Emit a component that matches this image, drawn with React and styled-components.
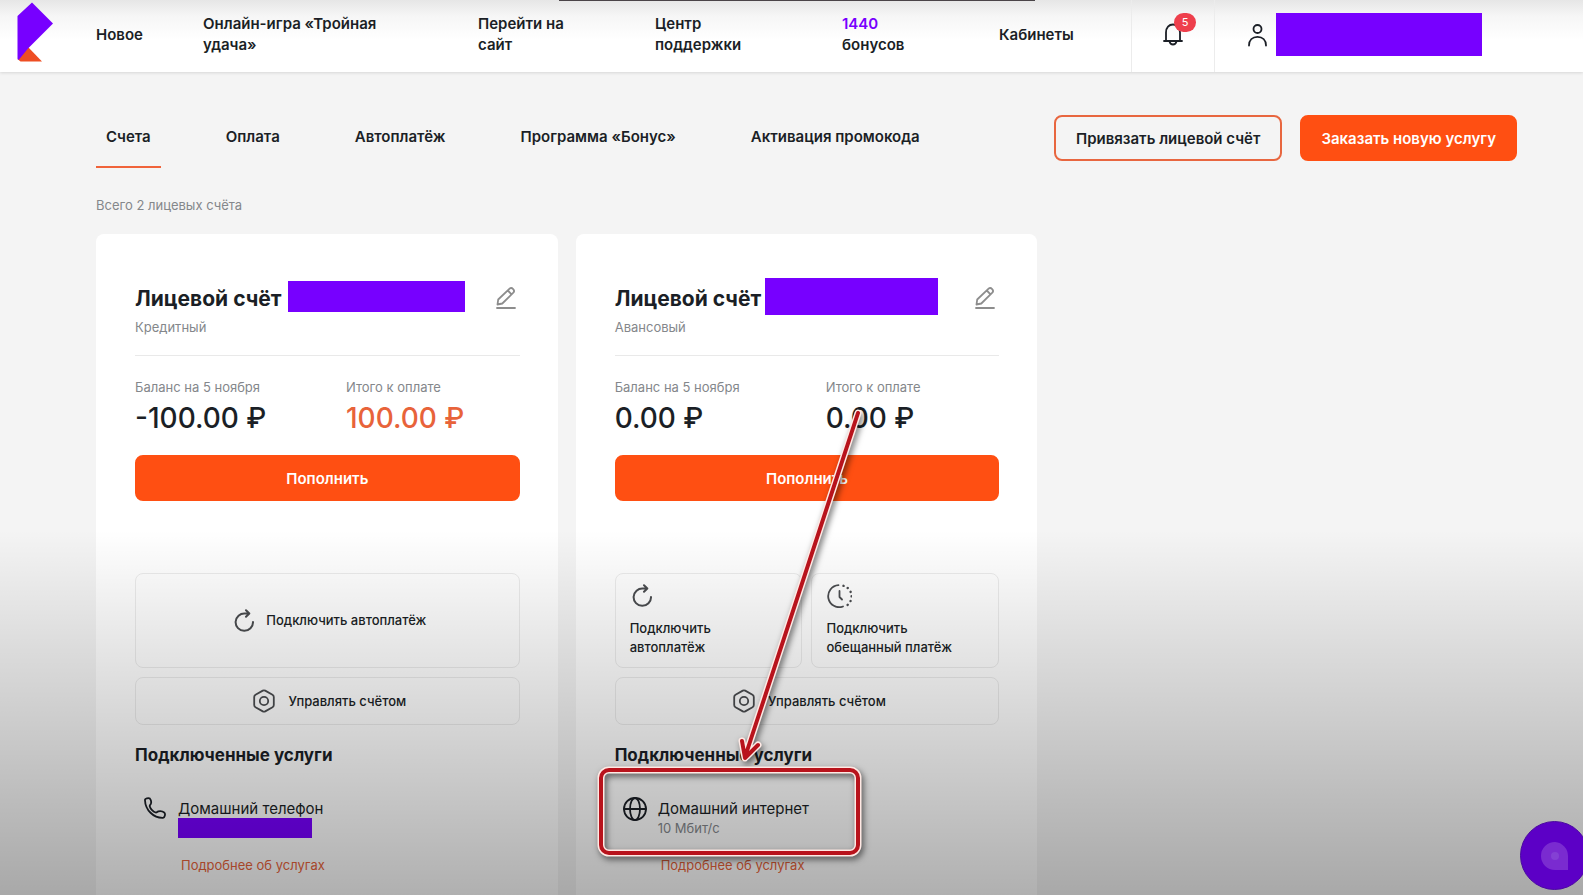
import React from "react";
import styled, { createGlobalStyle, css } from "styled-components";

const ink = "#1b1f26";
const muted = "#84878b";
const orange = "#ff4f12";
const violet = "#7700ff";

const GlobalStyle = createGlobalStyle`
  *, *::before, *::after { box-sizing: border-box; }
  body { margin: 0; background: #f4f4f4; color: ${ink}; font-family: Inter, "Liberation Sans", sans-serif; }
  h2, h3, p, dl, dd { margin: 0; }
  a { color: inherit; text-decoration: none; }
  button { font: inherit; color: inherit; cursor: pointer; }
`;

const Page = styled.div`
  position: relative;
  display: flex;
  flex-direction: column;
  min-height: 100vh;
  overflow: hidden;
`;

const Header = styled.header`
  position: relative;
  display: flex;
  align-items: stretch;
  height: 72px;
  background: linear-gradient(#e6e6e6, #f6f6f6 16px, #ffffff 40px);
  box-shadow: 0 1px 3px rgba(0, 0, 0, 0.12);
`;

const TopLine = styled.span`
  position: absolute;
  top: 0;
  left: 559px;
  width: 476px;
  height: 1px;
  background: #4a4448;
`;

const LogoLink = styled.a`
  flex: none;
  width: 96px;
  padding-left: 17px;
`;

const Nav = styled.nav`
  display: flex;
  align-items: center;
  gap: 58px;
  padding: 0 56px 4px 0;
  border-right: 1px solid #ececec;
`;

const NavLink = styled.a`
  width: ${(p) => p.$w}px;
  font-size: 15px;
  font-weight: 600;
  line-height: 21px;
`;

const Bonus = styled.span`
  display: block;
  color: ${violet};
`;

const Bell = styled.button`
  position: relative;
  flex: none;
  width: 83px;
  padding: 0;
  border: 0;
  border-right: 1px solid #ececec;
  background: none;
`;

const Badge = styled.span`
  position: absolute;
  top: 13px;
  left: 42px;
  width: 22px;
  height: 19px;
  border-radius: 10px;
  background: #ee3f4c;
  color: #fff;
  font-size: 11px;
  line-height: 19px;
  text-align: center;
`;

const Profile = styled.div`
  display: flex;
  align-items: center;
  gap: 8px;
  padding: 0 0 3px 32px;
`;

const Redaction = styled.span`
  flex: none;
  display: block;
  width: ${(p) => p.$w}px;
  height: ${(p) => p.$h}px;
  background: ${violet};
`;

const Main = styled.main`
  flex: 1;
  display: flex;
  flex-direction: column;
  padding: 43px 66px 0 96px;
`;

const Toolbar = styled.div`
  display: flex;
  align-items: flex-start;
  justify-content: space-between;
`;

const Tabs = styled.nav`
  display: flex;
  gap: 55px;
`;

const Tab = styled.a`
  height: 53px;
  padding: 0 10px;
  border-bottom: 2px solid ${(p) => (p.$active ? "#f0633a" : "transparent")};
  font-size: 15px;
  font-weight: 600;
  line-height: 43px;
  white-space: nowrap;
`;

const Actions = styled.div`
  display: flex;
  gap: 18px;
`;

const Button = styled.button`
  height: 46px;
  padding: 0 19px;
  border: 2px solid ${orange};
  border-radius: 8px;
  background: ${orange};
  color: #fff;
  font-size: 15px;
  font-weight: 600;
  white-space: nowrap;
  ${(p) =>
    p.$outline &&
    css`
      padding: 0 20px;
      border-color: #e8663f;
      background: transparent;
      color: ${ink};
    `}
  ${(p) =>
    p.$wide &&
    css`
      width: 100%;
      margin-top: 21px;
    `}
`;

const Count = styled.p`
  margin: 27px 0 19px;
  color: ${muted};
  font-size: 13px;
  line-height: 20px;
`;

const Cards = styled.div`
  flex: 1;
  display: grid;
  grid-template-columns: repeat(3, 1fr);
  gap: 18px;
`;

const Card = styled.section`
  position: relative;
  padding: 44px 38px 20px 39px;
  border-radius: 8px 8px 0 0;
  background: #fff;
`;

const CardHead = styled.div`
  display: flex;
  align-items: center;
  height: 36px;
`;

const Title = styled.h2`
  width: ${(p) => p.$w}px;
  padding-top: 6px;
  font-size: 21px;
  font-weight: 700;
  line-height: 30px;
  white-space: nowrap;
`;

const EditButton = styled.button`
  margin-left: auto;
  padding: 4px 4px 0;
  border: 0;
  background: none;
  color: #8d8d8d;
  line-height: 0;
`;

const Kind = styled.p`
  margin-top: 3px;
  padding-bottom: 18px;
  border-bottom: 1px solid #e9e9e9;
  color: ${muted};
  font-size: 13px;
  line-height: 20px;
`;

const Sums = styled.dl`
  display: grid;
  grid-template-columns: 211px 1fr;
  margin-top: 21px;
`;

const Label = styled.dt`
  color: ${muted};
  font-size: 13px;
  line-height: 20px;
`;

const Amount = styled.dd`
  margin-top: 5px;
  color: ${(p) => (p.$due ? "#e8633a" : ink)};
  font-size: 28px;
  font-weight: 500;
  line-height: 32px;
  white-space: nowrap;
`;

const Options = styled.div`
  display: grid;
  grid-template-columns: repeat(${(p) => p.$cols}, 1fr);
  gap: 9px;
  margin-top: 72px;
`;

const Option = styled.button`
  display: flex;
  align-items: center;
  justify-content: center;
  gap: 12px;
  height: 95px;
  padding: 0 0 0 4px;
  border: 1px solid #ececec;
  border-radius: 8px;
  background: none;
  font-size: 13px;
  font-weight: 500;
  line-height: 19px;
  text-align: left;

  svg {
    color: #4b4d50;
  }
  ${(p) =>
    p.$stacked &&
    css`
      flex-direction: column;
      align-items: flex-start;
      gap: 11px;
      padding: 0 14px;
    `}
  ${(p) =>
    p.$row &&
    css`
      grid-column: 1 / -1;
      height: 48px;
    `}
`;

const Subhead = styled.h3`
  margin-top: 18px;
  font-size: 17px;
  font-weight: 700;
  line-height: 24px;
`;

const Service = styled.div`
  display: flex;
  gap: 10px;
  height: 41px;
  margin-top: 30px;
  padding-left: 8px;
`;

const ServiceText = styled.div`
  padding-top: 2px;
`;

const ServiceName = styled.p`
  font-size: 15px;
  line-height: 19px;
`;

const ServiceNote = styled.p`
  color: ${muted};
  font-size: 13px;
  line-height: 20px;
`;

const More = styled.a`
  display: inline-block;
  margin: 17px 0 0 46px;
  color: #e8633a;
  font-size: 13px;
  line-height: 20px;
`;

const Shade = styled.div`
  position: absolute;
  z-index: 1;
  inset: auto 0 0;
  height: 365px;
  background: linear-gradient(rgba(0, 0, 0, 0), rgba(0, 0, 0, 0.31));
  pointer-events: none;
`;

const Pointer = styled.svg`
  position: absolute;
  z-index: 2;
  left: 14px;
  top: 170px;
  overflow: visible;
  filter: drop-shadow(2px 3px 3px rgba(0, 0, 0, 0.55));
  pointer-events: none;
`;

const Chat = styled.button`
  position: absolute;
  z-index: 2;
  right: -6px;
  bottom: 5px;
  width: 69px;
  height: 69px;
  padding: 0;
  border: 1px solid #4b0aa0;
  border-radius: 50%;
  background: #5c00c6;
  line-height: 0;
`;

const strokes = {
  fill: "none",
  stroke: "currentColor",
  strokeWidth: 1.8,
  strokeLinecap: "round",
  strokeLinejoin: "round",
  "aria-hidden": true,
};

const Logo = () => (
  <svg width="37" height="63" viewBox="0 0 37 63" aria-hidden="true">
    <path d="M11 47L25 61.500H3.500L0.500 59Z" fill="#ee4e23" />
    <path d="M15 2.500L36 23.500L11 48.500L2 59.500Q0.500 60.500 0.500 58V16Z" fill={violet} />
  </svg>
);

const BellIcon = () => (
  <svg width="20" height="24" viewBox="0 0 20 24" {...strokes}>
    <path d="M1 19H19M3 19V10.500C3 5.500 6 2.500 10 2.500S17 5.500 17 10.500V19M6.500 19.500C7 21.500 8.300 22.500 10 22.500S13 21.500 13.500 19.500" />
  </svg>
);

const UserIcon = () => (
  <svg width="21" height="24" viewBox="0 0 21 24" {...strokes}>
    <circle cx="10.500" cy="6" r="4" />
    <path d="M2 22.500C2 17 5.500 13.800 10.500 13.800S19 17 19 22.500" />
  </svg>
);

const EditIcon = () => (
  <svg width="20" height="24" viewBox="0 0 20 24" {...strokes}>
    <path d="M1.500 18.500L2.200 13.500L13.600 2.700C15.800 0.700 19.600 4.200 17.300 6.700L6.300 17.500ZM11.800 4.500L15.500 8.300M1 22H19" />
  </svg>
);

const RefreshIcon = () => (
  <svg width="22" height="24" viewBox="-2 0 22 24" {...strokes} strokeWidth="2">
    <path d="M19 13A8.700 8.700 0 1 1 11 4.500H14.500M12 1.200L15.300 4.500L12 7.800" />
  </svg>
);

const ClockIcon = () => (
  <svg width="26" height="24" viewBox="-2 0 26 24" {...strokes}>
    <path d="M10.500 1.200A11 11 0 1 0 15 22.500M11.500 7V13L14 15.500" />
    <path d="M15.500 1.800A11 11 0 0 1 18 22" strokeWidth="2.400" strokeDasharray="0.100 4.600" />
  </svg>
);

const NutIcon = () => (
  <svg width="24" height="24" viewBox="0 0 24 24" {...strokes}>
    <path d="M10.800 1.600Q12 1 13.200 1.600L20.500 5.800Q21.800 6.600 21.800 8V16Q21.800 17.400 20.500 18.200L13.200 22.400Q12 23 10.800 22.400L3.500 18.200Q2.200 17.400 2.200 16V8Q2.200 6.600 3.500 5.800Z" />
    <circle cx="12" cy="12" r="4.200" />
  </svg>
);

const PhoneIcon = () => (
  <svg width="25" height="22" viewBox="0 0 25 22" {...strokes}>
    <path d="M2 3.200C1.500 1.500 5.800 0.500 6.800 1.500C8 3 8.500 5.200 7.800 6.800C7.300 7.800 6.500 8.300 6.700 9.200C7.300 11.700 10.300 14.800 12.800 15.500C13.700 15.700 14.200 14.800 15.300 14.400C17 13.900 20 14.500 21.500 15.800C22.600 16.900 21.700 20.800 20 20.900C10.500 21.200 2.300 12.800 2 3.200Z" />
  </svg>
);

const GlobeIcon = () => (
  <svg width="25" height="24" viewBox="0 0 25 24" {...strokes}>
    <circle cx="12" cy="12" r="11" />
    <ellipse cx="12" cy="12" rx="5" ry="11" />
    <path d="M1 12H23" />
  </svg>
);

const NAV = [
  { text: "Новое", width: 49 },
  { text: "Онлайн-игра «Тройная удача»", width: 217 },
  { text: "Перейти на сайт", width: 119 },
  { text: "Центр поддержки", width: 129 },
  { text: "бонусов", width: 99, bonus: "1440" },
  { text: "Кабинеты", width: 76 },
];

const TABS = ["Счета", "Оплата", "Автоплатёж", "Программа «Бонус»", "Активация промокода"];

function Account({ titleWidth, mask, kind, balance, total, due, options, service, children }) {
  return (
    <Card>
      <CardHead>
        <Title $w={titleWidth}>Лицевой счёт</Title>
        <Redaction $w={mask[0]} $h={mask[1]} />
        <EditButton aria-label="Изменить">
          <EditIcon />
        </EditButton>
      </CardHead>
      <Kind>{kind}</Kind>
      <Sums>
        <div>
          <Label>Баланс на 5 ноября</Label>
          <Amount>{balance}</Amount>
        </div>
        <div>
          <Label>Итого к оплате</Label>
          <Amount $due={due}>{total}</Amount>
        </div>
      </Sums>
      <Button $wide>Пополнить</Button>
      <Options $cols={options.length}>
        {options.map(({ icon, text }) => (
          <Option key={text} $stacked={options.length > 1}>
            {icon}
            <span>{text}</span>
          </Option>
        ))}
        <Option $row>
          <NutIcon />
          <span>Управлять счётом</span>
        </Option>
      </Options>
      <Subhead>Подключенные услуги</Subhead>
      <Service>
        {service.icon}
        <ServiceText>
          <ServiceName>{service.name}</ServiceName>
          {service.note ? <ServiceNote>{service.note}</ServiceNote> : <Redaction $w={134} $h={20} />}
        </ServiceText>
      </Service>
      <More href="#services">Подробнее об услугах</More>
      {children}
    </Card>
  );
}

function Highlight() {
  const shapes = (
    <>
      <rect x="11" y="366" width="257" height="83" rx="8" />
      <path d="M268 9L156 350M152 337L155 354L168 341" />
    </>
  );
  return (
    <Pointer width="290" height="470" viewBox="0 0 290 470" fill="none" strokeLinecap="round" strokeLinejoin="round" aria-hidden="true">
      <g stroke="#ffe9e4" strokeWidth="7">{shapes}</g>
      <g stroke="#b8131c" strokeWidth="4">{shapes}</g>
    </Pointer>
  );
}

export default function App() {
  return (
    <>
      <GlobalStyle />
      <Page>
        <Header>
          <LogoLink href="#home" aria-label="Ростелеком">
            <Logo />
          </LogoLink>
          <Nav>
            {NAV.map(({ text, width, bonus }) => (
              <NavLink key={text} href="#nav" $w={width}>
                {bonus && <Bonus>{bonus}</Bonus>}
                {text}
              </NavLink>
            ))}
          </Nav>
          <Bell aria-label="Уведомления">
            <BellIcon />
            <Badge>5</Badge>
          </Bell>
          <Profile>
            <UserIcon />
            <Redaction $w={206} $h={43} />
          </Profile>
          <TopLine />
        </Header>
        <Main>
          <Toolbar>
            <Tabs>
              {TABS.map((tab, i) => (
                <Tab key={tab} href="#tab" $active={i === 0}>
                  {tab}
                </Tab>
              ))}
            </Tabs>
            <Actions>
              <Button $outline>Привязать лицевой счёт</Button>
              <Button>Заказать новую услугу</Button>
            </Actions>
          </Toolbar>
          <Count>Всего 2 лицевых счёта</Count>
          <Cards>
            <Account
              titleWidth={153}
              mask={[177, 31]}
              kind="Кредитный"
              balance="-100.00 ₽"
              total="100.00 ₽"
              due
              options={[{ icon: <RefreshIcon />, text: "Подключить автоплатёж" }]}
              service={{ icon: <PhoneIcon />, name: "Домашний телефон" }}
            />
            <Account
              titleWidth={150}
              mask={[173, 37]}
              kind="Авансовый"
              balance="0.00 ₽"
              total="0.00 ₽"
              options={[
                { icon: <RefreshIcon />, text: "Подключить автоплатёж" },
                { icon: <ClockIcon />, text: "Подключить обещанный платёж" },
              ]}
              service={{ icon: <GlobeIcon />, name: "Домашний интернет", note: "10 Мбит/с" }}
            >
              <Highlight />
            </Account>
          </Cards>
        </Main>
        <Shade />
        <Chat aria-label="Чат поддержки">
          <svg width="30" height="30" viewBox="0 0 30 30" aria-hidden="true">
            <path d="M15 1A14 14 0 1 0 15 29H28V15A14 14 0 0 0 15 1Z" fill="#7a2bd0" />
            <circle cx="15" cy="15" r="4" fill="#8440d4" />
          </svg>
        </Chat>
      </Page>
    </>
  );
}
